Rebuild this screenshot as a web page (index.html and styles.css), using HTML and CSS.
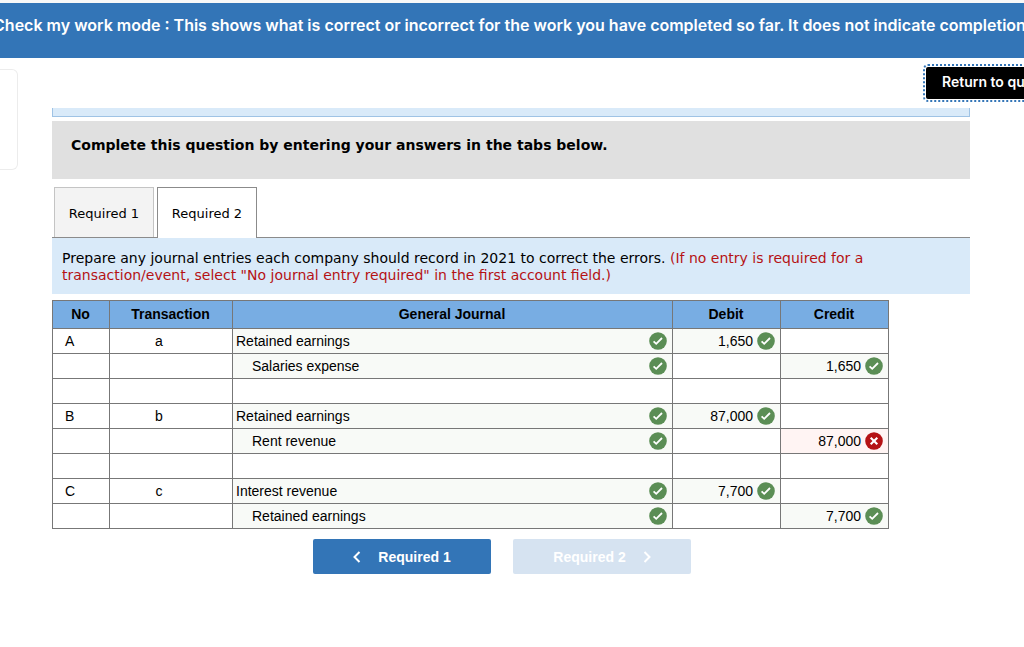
FILE: index.html
```html
<!DOCTYPE html>
<html lang="en">
<head>
<meta charset="utf-8">
<title>Check my work</title>
<link rel="stylesheet" href="styles.css">
</head>
<body>
<svg class="sprite" aria-hidden="true">
  <symbol id="ok" viewBox="0 0 18 18"><circle cx="9" cy="9" r="8.8" fill="#5b8e55"/><path d="M4.6 9.3 7.2 11.8 13 6" fill="none" stroke="#fff" stroke-width="1.8"/></symbol>
  <symbol id="bad" viewBox="0 0 18 18"><circle cx="9" cy="9" r="8.8" fill="#b51214"/><path d="M5.7 5.7 12.3 12.3M12.3 5.7 5.7 12.3" fill="none" stroke="#fff" stroke-width="2.1"/></symbol>
</svg>
<header class="banner"><p class="banner-text">Check my work mode : This shows what is correct or incorrect for the work you have completed so far. It does not indicate completion.</p></header>
<div class="page">
  <aside class="side-card"></aside>
  <main class="main">
    <div class="toolbar"><button class="return" type="button">Return to question</button></div>
    <div class="info-end"></div>
    <h1 class="prompt">Complete this question by entering your answers in the tabs below.</h1>
    <div class="tabs" role="tablist">
      <button class="tab" type="button" role="tab" aria-selected="false">Required 1</button>
      <button class="tab tab-active" type="button" role="tab" aria-selected="true">Required 2</button>
    </div>
    <p class="instructions">Prepare any journal entries each company should record in 2021 to correct the errors. <span class="note">(If no entry is required for a transaction/event, select "No journal entry required" in the first account field.)</span></p>
    <div class="table-wrap">
      <table class="journal">
        <colgroup><col class="col-no"><col class="col-trans"><col><col class="col-amount"><col class="col-amount"></colgroup>
        <thead><tr><th scope="col">No</th><th scope="col">Transaction</th><th scope="col">General Journal</th><th scope="col">Debit</th><th scope="col">Credit</th></tr></thead>
        <tbody>
          <tr><td class="no">A</td><td class="trans">a</td><td class="right"><div class="cell">Retained earnings<svg class="mark"><use href="#ok"/></svg></div></td><td class="right"><div class="cell amount">1,650<svg class="mark"><use href="#ok"/></svg></div></td><td></td></tr>
          <tr><td></td><td></td><td class="right"><div class="cell indent">Salaries expense<svg class="mark"><use href="#ok"/></svg></div></td><td></td><td class="right"><div class="cell amount">1,650<svg class="mark"><use href="#ok"/></svg></div></td></tr>
          <tr><td></td><td></td><td></td><td></td><td></td></tr>
          <tr><td class="no">B</td><td class="trans">b</td><td class="right"><div class="cell">Retained earnings<svg class="mark"><use href="#ok"/></svg></div></td><td class="right"><div class="cell amount">87,000<svg class="mark"><use href="#ok"/></svg></div></td><td></td></tr>
          <tr><td></td><td></td><td class="right"><div class="cell indent">Rent revenue<svg class="mark"><use href="#ok"/></svg></div></td><td></td><td class="wrong"><div class="cell amount">87,000<svg class="mark"><use href="#bad"/></svg></div></td></tr>
          <tr><td></td><td></td><td></td><td></td><td></td></tr>
          <tr><td class="no">C</td><td class="trans">c</td><td class="right"><div class="cell">Interest revenue<svg class="mark"><use href="#ok"/></svg></div></td><td class="right"><div class="cell amount">7,700<svg class="mark"><use href="#ok"/></svg></div></td><td></td></tr>
          <tr><td></td><td></td><td class="right"><div class="cell indent">Retained earnings<svg class="mark"><use href="#ok"/></svg></div></td><td></td><td class="right"><div class="cell amount">7,700<svg class="mark"><use href="#ok"/></svg></div></td></tr>
        </tbody>
      </table>
    </div>
    <nav class="pager">
      <button class="step" type="button"><svg class="chevron" viewBox="0 0 8 12"><path d="M6.5 1 1.5 6 6.5 11"/></svg>Required 1</button>
      <button class="step" type="button" disabled>Required 2<svg class="chevron" viewBox="0 0 8 12"><path d="M1.5 1 6.5 6 1.5 11"/></svg></button>
    </nav>
  </main>
</div>
</body>
</html>
```
FILE: styles.css
```css
* { box-sizing: border-box; }
body { margin: 0; background: #fff; color: #000; overflow-x: hidden; border-top: 3px solid #f8f8f8; font-family: "Liberation Sans", Arial, sans-serif; font-size: 14px; }
button { font: inherit; }
.sprite { display: none; }
.banner { height: 55px; padding-top: 11px; display: flex; justify-content: center; overflow: hidden; background: #3375b7; color: #fff; }
.banner-text { margin: 0; flex: none; white-space: nowrap; font: 600 16px/22px Inter, sans-serif; }
.page { display: grid; grid-template-columns: 18px minmax(0, 1fr); column-gap: 34px; padding-right: 54px; align-items: start; overflow-x: hidden; }
.side-card { height: 101px; margin-top: 11px; border: 1px solid #ececec; border-left: 0; border-radius: 0 6px 6px 0; }
.toolbar { display: flex; justify-content: flex-end; height: 50px; padding-top: 9px; margin-right: -120px; }
.return { width: 164px; height: 32px; padding: 0 0 2px 16px; border: 0; border-radius: 2px; background: #000; color: #fff; font: 600 14px/20px Inter, sans-serif; text-align: left; outline: 2px dotted #3375b7; outline-offset: 1px; }
.info-end { height: 9px; background: #d9eaf9; border: 1px solid #9fc3e5; border-top: 0; }
.prompt { margin: 4px 0 8px; padding: 14px 19px 24px; background: #e0e0e0; font: bold 14px/20px Verdana, "DejaVu Sans", sans-serif; }
.tabs { display: flex; gap: 3px; padding-left: 2px; border-bottom: 1px solid #8b8b8b; }
.tab { width: 100px; height: 50px; padding: 2px 0 0; border: 1px solid #c4c4c4; border-bottom: 0; background: #f3f3f3; color: #000; font: 13px/20px Verdana, "DejaVu Sans", sans-serif; }
.tab-active { margin-bottom: -1px; height: 51px; border-color: #8b8b8b; background: #fff; }
.instructions { margin: 0 0 6px; padding: 12px 80px 10px 10px; background: #d9eaf9; font: 14px/17px Verdana, "DejaVu Sans", sans-serif; }
.note { color: #b51214; }
.table-wrap { padding-right: 81px; }
.journal { width: 100%; table-layout: fixed; border-collapse: collapse; font-size: 14px; line-height: 18px; }
.col-no { width: 57px; }
.col-trans { width: 123px; }
.col-amount { width: 108px; }
.journal th, .journal td { border: 1px solid #777; padding: 0 4px 1px 3px; height: 25px; }
.journal th { height: 28px; background: #78ade3; }
.journal .no { padding-left: 12px; }
.journal .trans { text-align: center; padding-right: 27px; }
.right { background: #f8faf7; }
.wrong { background: #fff4f3; }
.cell { display: flex; align-items: center; justify-content: space-between; }
.amount { justify-content: flex-end; gap: 4px; }
.indent { padding-left: 16px; }
.mark { flex: none; width: 18px; height: 18px; margin-right: 1px; }
.pager { display: flex; justify-content: center; gap: 22px; margin-top: 10px; padding-right: 18px; }
.step { display: flex; align-items: center; justify-content: center; gap: 17px; width: 178px; height: 35px; padding: 0; border: 0; border-radius: 2px; background: #3375b7; color: #fff; font-weight: bold; }
.step:disabled { background: #d6e3f1; }
.chevron { width: 8px; height: 12px; fill: none; stroke: currentColor; stroke-width: 2; }
```
